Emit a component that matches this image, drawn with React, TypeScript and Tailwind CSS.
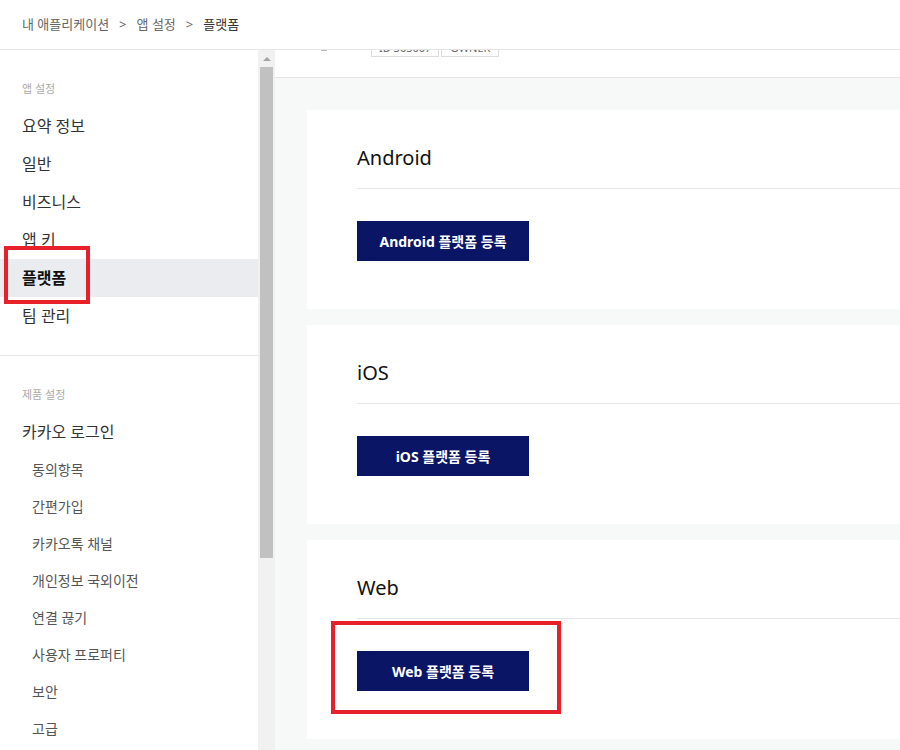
import React from "react";

const font = { fontFamily: '"Noto Sans", "Noto Sans CJK KR", sans-serif' };

function NavItem({ label, active }: { label: string; active?: boolean }) {
  return (
    <div
      className={`h-[38px] flex items-center px-[22px] text-[16px] ${
        active ? "bg-[#ebecf0] text-[#111] font-semibold" : "text-[#333]"
      }`}
    >
      {label}
    </div>
  );
}

function SubItem({ label }: { label: string }) {
  return (
    <div className="h-[37px] flex items-center pl-[32px] text-[14px] text-[#555]">
      {label}
    </div>
  );
}

function PlatformCard({ title, button }: { title: string; button: string }) {
  return (
    <div className="bg-white w-[760px] h-[199px] pt-[33px] pl-[50px] shrink-0">
      <div className="h-[30px] flex items-center text-[20px] text-[#111] leading-none">
        {title}
      </div>
      <div className="mt-[15px] h-px bg-[#e5e5e5]" />
      <div className="mt-[32px] w-[172px] h-[40px] bg-[#0a1566] text-white text-[14px] font-bold flex items-center justify-center">
        {button}
      </div>
    </div>
  );
}

export default function App() {
  return (
    <div className="relative w-[900px] h-[750px] overflow-hidden bg-white" style={font}>
      {/* header */}
      <div className="h-[50px] border-b border-[#e5e5e5] flex items-center px-[22px] text-[13px] text-[#666]">
        <span>내 애플리케이션</span>
        <span className="mx-[10px]">&gt;</span>
        <span>앱 설정</span>
        <span className="mx-[10px]">&gt;</span>
        <span className="text-[#333]">플랫폼</span>
      </div>

      <div className="flex h-[700px]">
        {/* sidebar */}
        <div className="w-[258px] shrink-0 bg-white pt-[31px]">
          <div className="h-[16px] flex items-center px-[22px] text-[11px] text-[#aaa]">앱 설정</div>
          <div className="mt-[10px]">
            <NavItem label="요약 정보" />
            <NavItem label="일반" />
            <NavItem label="비즈니스" />
            <NavItem label="앱 키" />
            <NavItem label="플랫폼" active />
            <NavItem label="팀 관리" />
          </div>
          <div className="mt-[20px] h-px bg-[#e5e5e5]" />
          <div className="mt-[31px] h-[16px] flex items-center px-[22px] text-[11px] text-[#aaa]">제품 설정</div>
          <div className="mt-[10px]">
            <NavItem label="카카오 로그인" />
            <SubItem label="동의항목" />
            <SubItem label="간편가입" />
            <SubItem label="카카오톡 채널" />
            <SubItem label="개인정보 국외이전" />
            <SubItem label="연결 끊기" />
            <SubItem label="사용자 프로퍼티" />
            <SubItem label="보안" />
            <SubItem label="고급" />
          </div>
        </div>

        {/* scrollbar */}
        <div className="w-[17px] shrink-0 bg-[#f1f1f1] flex flex-col items-center">
          <div className="h-[17px] flex items-center justify-center">
            <div className="w-0 h-0 border-l-[4px] border-r-[4px] border-b-[4px] border-l-transparent border-r-transparent border-b-[#a3a3a3]" />
          </div>
          <div className="w-[13px] h-[491px] bg-[#c1c1c1]" />
        </div>

        {/* main */}
        <div className="flex-1 bg-[#f7f8f8] overflow-hidden">
          <div className="h-[28px] bg-white border-b border-[#e5e5e5] overflow-hidden relative">
            <div className="absolute left-[46px] top-0 w-[6px] h-px bg-[#bbb]" />
            <div className="flex gap-[2px] pl-[96px] mt-[-13px]">
              <div className="h-[20px] px-[7px] pb-[1px] border border-[#ddd] text-[11px] leading-[14px] text-[#666] flex items-end">ID 303007</div>
              <div className="h-[20px] px-[8px] pb-[1px] border border-[#ddd] text-[11px] leading-[14px] text-[#666] flex items-end">OWNER</div>
            </div>
          </div>
          <div className="pt-[32px] pl-[32px] flex flex-col gap-[16px]">
            <PlatformCard title="Android" button="Android 플랫폼 등록" />
            <PlatformCard title="iOS" button="iOS 플랫폼 등록" />
            <PlatformCard title="Web" button="Web 플랫폼 등록" />
          </div>
        </div>
      </div>

      {/* annotation overlays */}
      <div className="absolute left-[4px] top-[246px] w-[86px] h-[58px] border-[4px] border-[#e8202a]" />
      <div className="absolute left-[331px] top-[621px] w-[230px] h-[93px] border-[4px] border-[#e8202a]" />
    </div>
  );
}
